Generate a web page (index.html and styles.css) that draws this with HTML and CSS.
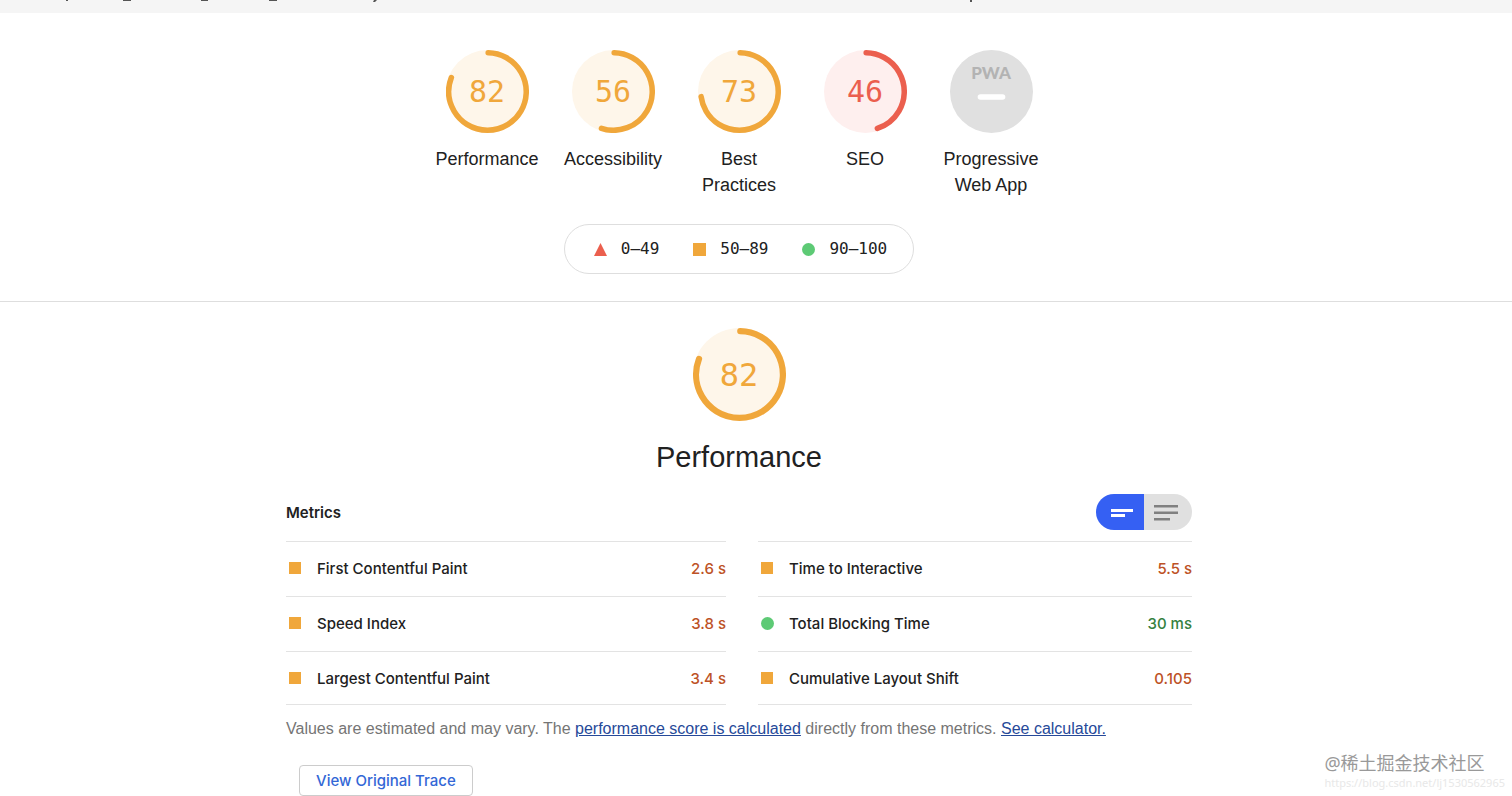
FILE: index.html
```
<!DOCTYPE html>
<html lang="en">
<head>
    <meta charset="UTF-8">
    <meta name="viewport" content="width=device-width, initial-scale=1.0">
    <title>Lighthouse Report</title>
    <link rel="stylesheet" href="styles.css">
</head>
<body>
    <div class="topbar">
        <svg width="1000" height="3" viewBox="0 0 1000 3" aria-hidden="true">
            <path d="M66 0h2v1h-2z M123 0h8v1h-8z M201 0h7v1h-7z M269 0h8v1h-8z M374 0h3l-2 2h-2z M970 0h2v2h-2z" fill="#555"/>
        </svg>
    </div>

    <header class="scores">
        <div class="gauges">
            <a class="gauge average" href="#performance">
                <span class="gauge-dial">
                    <svg viewBox="0 0 120 120"><circle class="gauge-base" cx="60" cy="60" r="60"/><path class="gauge-arc" pathLength="100" stroke-dasharray="81 100" d="M61 4a56 56 0 1 1-2 0"/></svg>
                    <span class="gauge-score">82</span>
                </span>
                <span class="gauge-label">Performance</span>
            </a>
            <a class="gauge average" href="#accessibility">
                <span class="gauge-dial">
                    <svg viewBox="0 0 120 120"><circle class="gauge-base" cx="60" cy="60" r="60"/><path class="gauge-arc" pathLength="100" stroke-dasharray="55 100" d="M61 4a56 56 0 1 1-2 0"/></svg>
                    <span class="gauge-score">56</span>
                </span>
                <span class="gauge-label">Accessibility</span>
            </a>
            <a class="gauge average" href="#best-practices">
                <span class="gauge-dial">
                    <svg viewBox="0 0 120 120"><circle class="gauge-base" cx="60" cy="60" r="60"/><path class="gauge-arc" pathLength="100" stroke-dasharray="73 100" d="M61 4a56 56 0 1 1-2 0"/></svg>
                    <span class="gauge-score">73</span>
                </span>
                <span class="gauge-label">Best Practices</span>
            </a>
            <a class="gauge fail" href="#seo">
                <span class="gauge-dial">
                    <svg viewBox="0 0 120 120"><circle class="gauge-base" cx="60" cy="60" r="60"/><path class="gauge-arc" pathLength="100" stroke-dasharray="45 100" d="M61 4a56 56 0 1 1-2 0"/></svg>
                    <span class="gauge-score">46</span>
                </span>
                <span class="gauge-label">SEO</span>
            </a>
            <a class="gauge" href="#pwa">
                <span class="gauge-dial">
                    <svg viewBox="0 0 60 60"><circle cx="30" cy="30" r="30" fill="#e0e0e0"/><rect x="20" y="32" width="20" height="4" rx="2" fill="#fff"/></svg>
                    <span class="pwa-text">PWA</span>
                </span>
                <span class="gauge-label">Progressive Web App</span>
            </a>
        </div>

        <div class="scale">
            <span class="scale-item"><svg class="mark" viewBox="0 0 12 12"><path d="M6 0l6 12H0z" fill="#eb5f4e"/></svg>0–49</span>
            <span class="scale-item"><svg class="mark" viewBox="0 0 12 12"><path d="M0 0h12v12H0z" fill="#f0a73b"/></svg>50–89</span>
            <span class="scale-item"><svg class="mark" viewBox="0 0 12 12"><circle cx="6" cy="6" r="6" fill="#5dca75"/></svg>90–100</span>
        </div>
    </header>

    <main class="category" id="performance">
        <div class="gauge gauge-large average">
            <span class="gauge-dial">
                <svg viewBox="0 0 120 120"><circle class="gauge-base" cx="60" cy="60" r="60"/><path class="gauge-arc" pathLength="100" stroke-dasharray="81 100" d="M61 4a56 56 0 1 1-2 0"/></svg>
                <span class="gauge-score">82</span>
            </span>
            <h1 class="category-title">Performance</h1>
        </div>

        <section class="metrics">
            <div class="metrics-header">
                <h2>Metrics</h2>
                <div class="toggle">
                    <label>
                        <input type="radio" name="view" aria-label="Compact view" checked>
                        <svg viewBox="0 0 24 24"><path d="M1 9h22v3H1zM1 14h14v3H1z"/></svg>
                    </label>
                    <label>
                        <input type="radio" name="view" aria-label="Expanded view">
                        <svg viewBox="0 0 24 24"><path d="M0 5h25v2.500H0zM0 11.500h25v2.500H0zM0 18h16v2.500H0z"/></svg>
                    </label>
                </div>
            </div>

            <div class="columns">
                <div class="column">
                    <div class="metric"><span class="icon-square"></span><span class="metric-name">First Contentful Paint</span><span class="metric-value">2.6 s</span></div>
                    <div class="metric"><span class="icon-square"></span><span class="metric-name">Speed Index</span><span class="metric-value">3.8 s</span></div>
                    <div class="metric"><span class="icon-square"></span><span class="metric-name">Largest Contentful Paint</span><span class="metric-value">3.4 s</span></div>
                </div>
                <div class="column">
                    <div class="metric"><span class="icon-square"></span><span class="metric-name">Time to Interactive</span><span class="metric-value">5.5 s</span></div>
                    <div class="metric pass"><span class="icon-circle"></span><span class="metric-name">Total Blocking Time</span><span class="metric-value">30 ms</span></div>
                    <div class="metric"><span class="icon-square"></span><span class="metric-name">Cumulative Layout Shift</span><span class="metric-value">0.105</span></div>
                </div>
            </div>

            <p class="note">Values are estimated and may vary. The <a href="#score">performance score is calculated</a> directly from these metrics. <a href="#calculator">See calculator.</a></p>
            <button class="trace" type="button">View Original Trace</button>
        </section>
    </main>

    <div class="watermark">
        <span class="watermark-name">@稀土掘金技术社区</span>
        <span class="watermark-url">https://blog.csdn.net/lj1530562965</span>
    </div>
</body>
</html>
```

FILE: styles.css
```
* {
    box-sizing: border-box;
}
body {
    margin: 0;
    font-family: "Liberation Sans", Arial, sans-serif;
    font-size: 16px;
    color: #212121;
    background-color: #fff;
    position: relative;
}
.topbar {
    height: 13px;
    background-color: #f5f5f5;
    overflow: hidden;
}
.topbar svg {
    display: block;
}

/* score gauges */
.scores {
    padding: 37px 34px 27px 0;
    border-bottom: 1px solid #dedede;
    display: flex;
    flex-direction: column;
    align-items: center;
}
.gauges {
    display: flex;
    justify-content: center;
}
.gauge {
    width: 126px;
    display: flex;
    flex-direction: column;
    align-items: center;
    color: #212121;
    text-decoration: none;
}
.gauge-dial {
    display: grid;
    place-items: center;
    width: 83px;
    height: 83px;
}
.gauge-dial > * {
    grid-area: 1 / 1;
}
.gauge-dial svg {
    width: 100%;
    height: 100%;
}
.gauge-score {
    font-family: "DejaVu Sans Mono", monospace;
    font-size: 30px;
    line-height: 36px;
}
.gauge-arc {
    fill: none;
    stroke-width: 8;
    stroke-linecap: round;
}
.average .gauge-base {
    fill: #fef6ea;
}
.average .gauge-arc {
    stroke: #f0a73b;
}
.average .gauge-score {
    color: #f0a73b;
}
.fail .gauge-base {
    fill: #feefee;
}
.fail .gauge-arc {
    stroke: #eb5f4e;
}
.fail .gauge-score {
    color: #eb5f4e;
}
.pwa-text {
    align-self: start;
    padding-top: 13px;
    font-family: Lato, sans-serif;
    font-size: 17px;
    font-weight: 900;
    line-height: 20px;
    color: #b3b3b3;
}
.gauge-label {
    margin-top: 13px;
    padding: 0 10px;
    font-size: 18px;
    line-height: 26px;
    text-align: center;
}
.scale {
    display: flex;
    gap: 34px;
    margin-top: 26px;
    padding: 0 26px 2px 29px;
    height: 50px;
    border: 1px solid #dedede;
    border-radius: 25px;
    font-family: "DejaVu Sans Mono", monospace;
}
.scale-item {
    display: flex;
    align-items: center;
    gap: 14px;
}
.mark {
    width: 13px;
    height: 13px;
    margin-top: 2px;
}

/* category */
.category {
    padding: 26px 34px 0 0;
}
.gauge-large {
    width: auto;
}
.gauge-large .gauge-dial {
    width: 93px;
    height: 93px;
}
.gauge-large .gauge-score {
    font-size: 32px;
}
.category-title {
    margin: 18px 0 0;
    font-size: 29px;
    font-weight: 400;
    line-height: 36px;
}
.metrics {
    max-width: 906px;
    margin: 19px auto 0;
}
.metrics-header {
    display: flex;
    justify-content: space-between;
    align-items: center;
    margin-bottom: 11px;
}
.metrics-header h2 {
    margin: 0;
    font-family: Inter, sans-serif;
    font-size: 15px;
    font-weight: 600;
}
.toggle {
    display: flex;
    border-radius: 18px;
    overflow: hidden;
}
.toggle label {
    display: grid;
    place-items: center;
    width: 48px;
    height: 36px;
    background-color: #e0e0e0;
    cursor: pointer;
}
.toggle label:first-child {
    padding-left: 4px;
}
.toggle label:last-child {
    padding-right: 4px;
}
.toggle input {
    appearance: none;
    grid-area: 1 / 1;
    margin: 0;
}
.toggle svg {
    grid-area: 1 / 1;
    width: 24px;
    height: 24px;
    fill: #808080;
}
.toggle label:has(input:checked) {
    background-color: #3560f3;
}
.toggle input:checked + svg {
    fill: #fff;
}
.columns {
    display: grid;
    grid-template-columns: 440fr 434fr;
    gap: 32px;
}
.column {
    border-bottom: 1px solid #e3e3e3;
}
.metric {
    display: flex;
    align-items: center;
    height: 55px;
    padding: 0 0 2px 3px;
    border-top: 1px solid #e3e3e3;
    font-family: Inter, sans-serif;
    font-size: 15px;
    font-weight: 500;
}
.metric:last-child {
    height: 53px;
    padding-bottom: 0;
}
.icon-square,
.icon-circle {
    width: 12px;
    height: 12px;
    margin-right: 16px;
    background-color: #f0a73b;
}
.icon-circle {
    width: 13px;
    height: 13px;
    margin-right: 15px;
    border-radius: 50%;
    background-color: #5dca75;
}
.metric-name {
    flex: 1;
}
.metric-value {
    color: #bd5226;
}
.pass .metric-value {
    color: #35813f;
}
.note {
    margin: 12px 0 0;
    line-height: 24px;
    color: #757575;
}
.note a {
    color: #264999;
}
.trace {
    display: block;
    margin: 24px 0 0 13px;
    padding: 0 16px;
    height: 31px;
    border: 1px solid #ccc;
    border-radius: 4px;
    background-color: #fff;
    font-family: Inter, sans-serif;
    font-size: 15px;
    font-weight: 500;
    color: #3367d6;
}

.watermark {
    position: absolute;
    right: 7px;
    bottom: 7px;
    display: flex;
    flex-direction: column;
    font-family: "Noto Sans", "Noto Sans CJK SC", sans-serif;
}
.watermark-name {
    font-size: 18px;
    line-height: 28px;
    color: #999;
    text-shadow: -1px -1px 0 #fff;
}
.watermark-url {
    font-size: 11px;
    line-height: 12px;
    color: #e8e8e8;
}
```
